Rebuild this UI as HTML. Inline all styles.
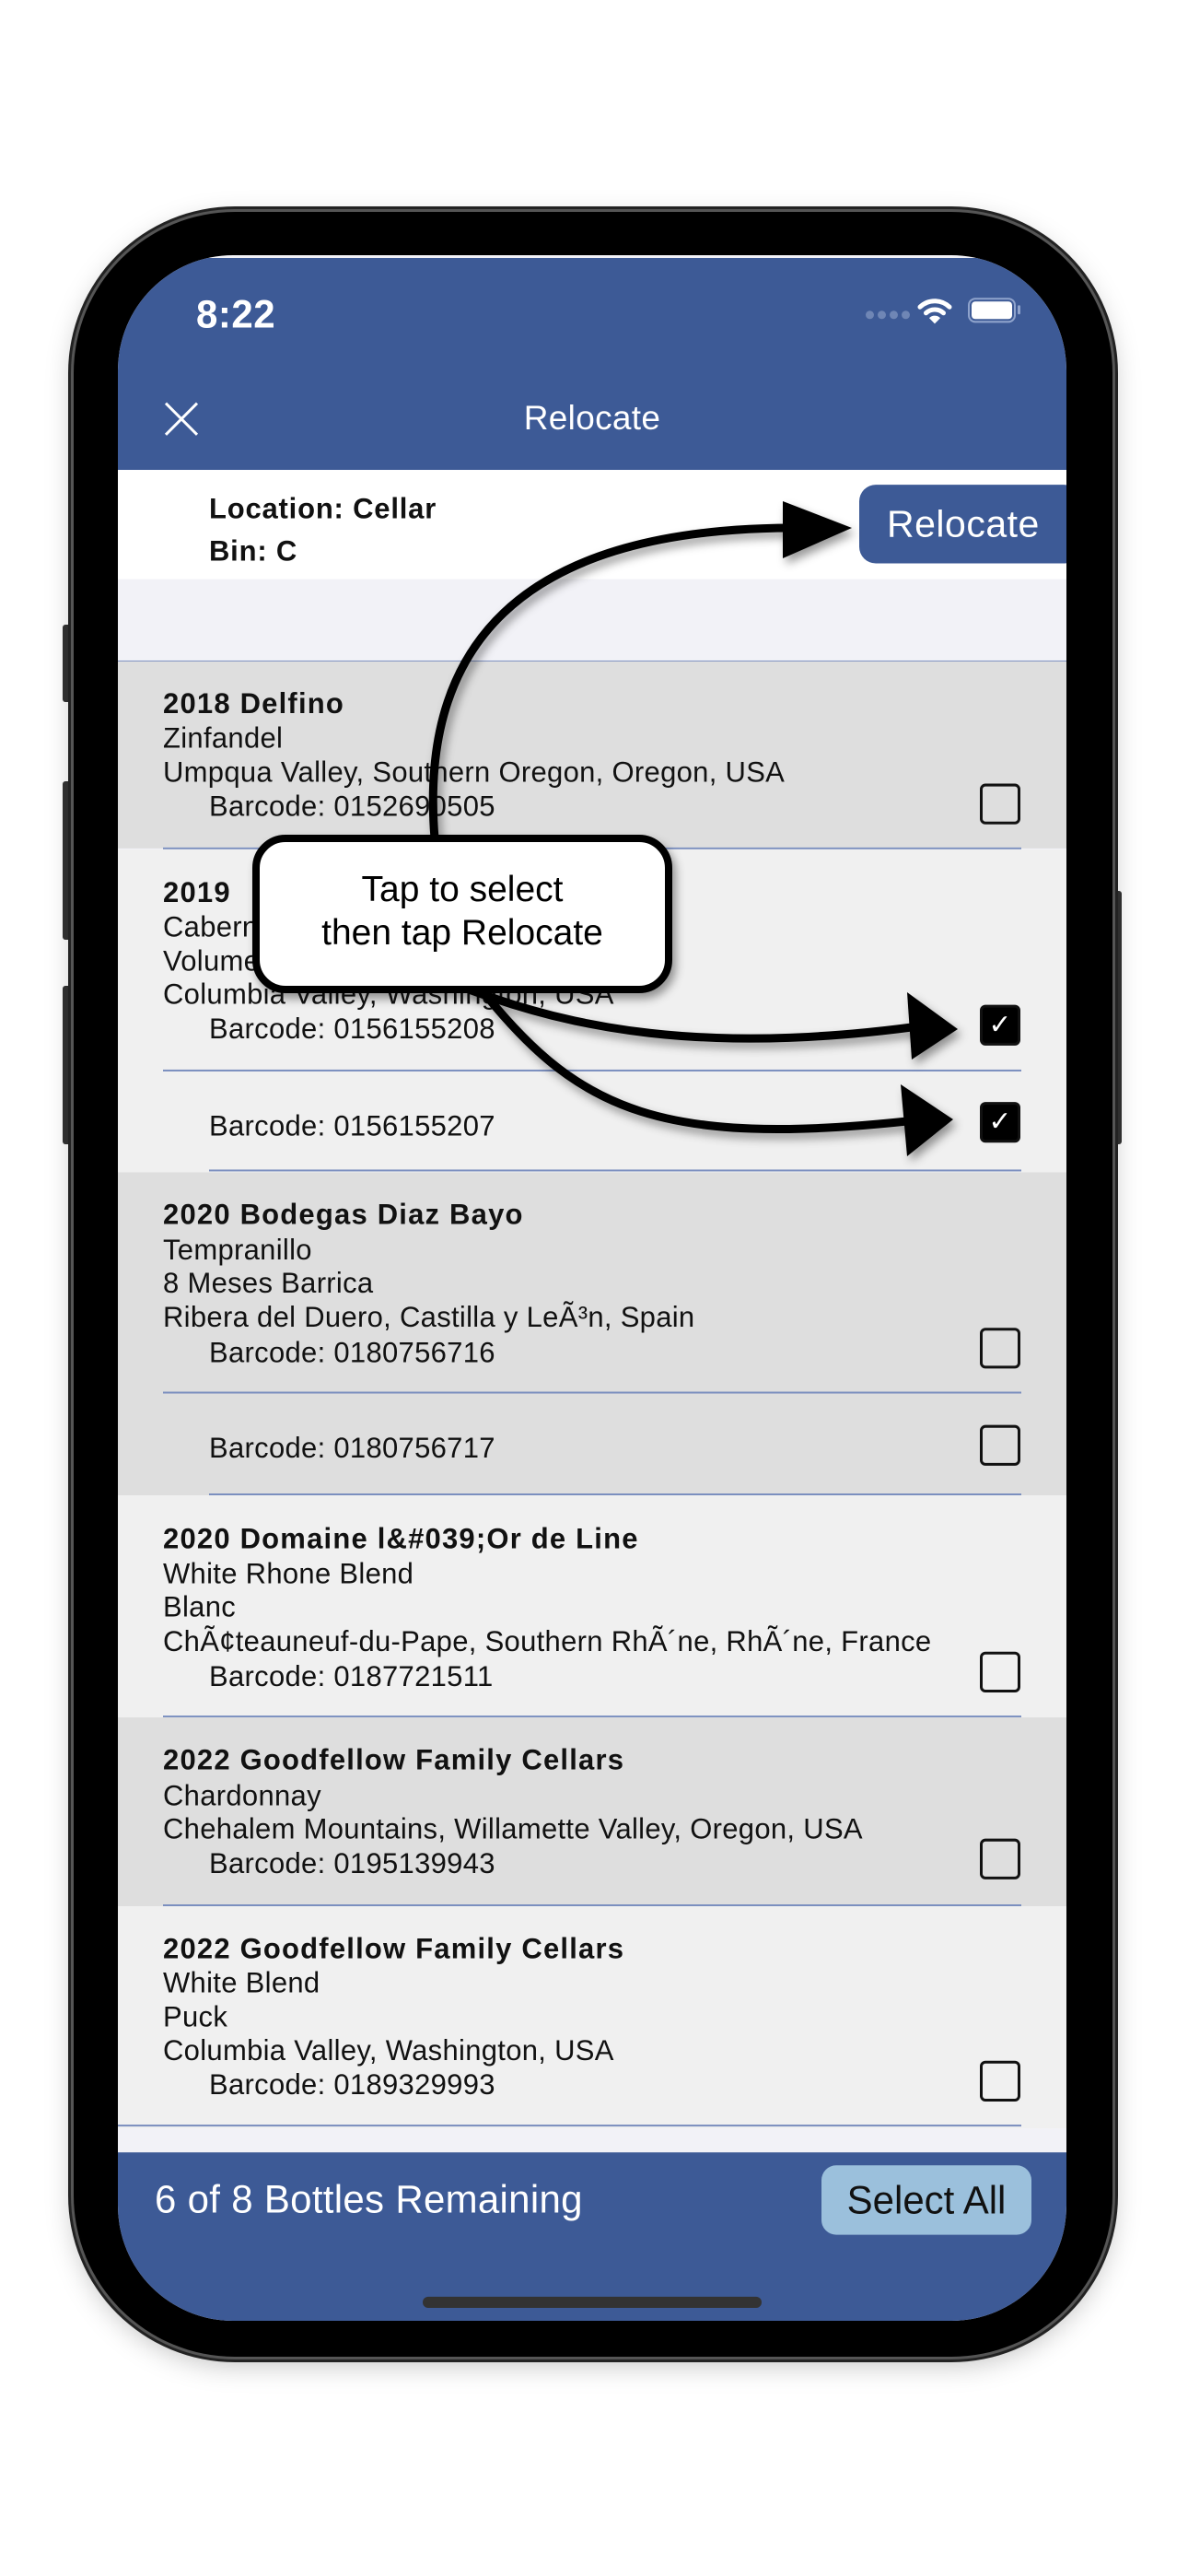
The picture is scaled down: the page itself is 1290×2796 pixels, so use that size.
<!DOCTYPE html>
<html><head><meta charset="utf-8">
<style>
*{margin:0;padding:0;box-sizing:border-box}
body{width:1290px;height:2796px;background:#fff;position:relative;overflow:hidden;font-family:"Liberation Sans",sans-serif}
.abs{position:absolute}
.phone{left:80px;top:230px;width:1128px;height:2328px;border-radius:175px;background:#000;box-shadow:0 0 0 3px #555,0 0 0 6px #222,0 8px 30px rgba(0,0,0,.25)}
.screen{left:128px;top:277px;width:1030px;height:2242px;border-radius:125px;overflow:hidden;background:#f2f2f7}
.wrap{position:absolute;left:0;top:0;width:1030px;height:2250px;transform-origin:0 0;transform:translateY(3px) scaleY(1.0045)}
.t{position:absolute;font-size:31px;line-height:34px;color:#111;white-space:nowrap;letter-spacing:0.3px}
.b{font-weight:bold;letter-spacing:1.2px}
.cb{position:absolute;width:44px;height:44px;border:3px solid #111;border-radius:6px;left:936px}
.cb.on{background:#000;color:#fff;font-size:30px;text-align:center;line-height:38px}
.ln{position:absolute;height:2px;background:#7b8fbf}
</style></head><body>
<div class="abs" style="left:68px;top:678px;width:14px;height:84px;background:#333;border-radius:3px"></div>
<div class="abs" style="left:68px;top:848px;width:14px;height:172px;background:#333;border-radius:3px"></div>
<div class="abs" style="left:68px;top:1070px;width:14px;height:172px;background:#333;border-radius:3px"></div>
<div class="abs" style="left:1204px;top:967px;width:14px;height:275px;background:#333;border-radius:3px"></div>
<div class="abs phone"></div>
<div class="abs screen"><div class="wrap">
  <div class="abs" style="left:0;top:0;width:1030px;height:229px;background:#3d5a96"></div>
  <div class="t" style="left:85px;top:41px;font-size:42px;line-height:40px;color:#fff;font-weight:bold;letter-spacing:0.5px">8:22</div>
  <div class="abs" style="left:812px;top:57px;width:48px;height:10px;display:flex;gap:4px"><i style="width:9px;height:9px;border-radius:50%;background:#6f86b5"></i><i style="width:9px;height:9px;border-radius:50%;background:#6f86b5"></i><i style="width:9px;height:9px;border-radius:50%;background:#6f86b5"></i><i style="width:9px;height:9px;border-radius:50%;background:#6f86b5"></i></div>
  <svg class="abs" style="left:868px;top:42px" width="38" height="30" viewBox="0 0 38 30"><path d="M3 11 A23 23 0 0 1 35 11" stroke="#fff" stroke-width="5" fill="none" stroke-linecap="round"/><path d="M9.5 17.5 A14 14 0 0 1 28.5 17.5" stroke="#fff" stroke-width="5" fill="none" stroke-linecap="round"/><path d="M19 29 L13 23 A8 8 0 0 1 25 23 Z" fill="#fff"/></svg>
  <div class="abs" style="left:923px;top:43px;width:52px;height:27px;border:2px solid #8fa3cc;border-radius:8px;padding:2px"><div style="width:100%;height:100%;background:#fff;border-radius:4px"></div></div>
  <div class="abs" style="left:977px;top:51px;width:3px;height:10px;background:#8fa3cc;border-radius:2px"></div>
  <svg class="abs" style="left:50px;top:155px" width="38" height="38"><path d="M2 2L36 36M36 2L2 36" stroke="#fff" stroke-width="3"/></svg>
  <div class="t" style="left:0;width:1030px;text-align:center;top:153px;font-size:37px;line-height:40px;color:#fff">Relocate</div>
  <div class="abs" style="left:0;top:229px;width:1030px;height:118px;background:#fff"></div>
  <div class="t b" style="left:99px;top:254px;font-size:31px;letter-spacing:0.8px">Location: Cellar</div>
  <div class="t b" style="left:99px;top:300px;font-size:31px;letter-spacing:0.8px">Bin: C</div>
  <div class="abs" style="left:805px;top:245px;width:240px;height:85px;background:#3d5a96;border-radius:18px;color:#fff;font-size:41px;line-height:85px;padding-left:30px;letter-spacing:0.5px">Relocate</div>
  <div class="ln" style="left:0;top:435px;width:1030px;height:1px"></div>
  <div class="abs" style="left:0;top:436px;width:1030px;height:202px;background:#dedede"></div>
  <div class="t b" style="left:49px;top:465px">2018 Delfino</div>
  <div class="t" style="left:49px;top:502px">Zinfandel</div>
  <div class="t" style="left:49px;top:539px">Umpqua Valley, Southern Oregon, Oregon, USA</div>
  <div class="t" style="left:99px;top:576px">Barcode: 0152690505</div>
  <div class="cb" style="top:568px"></div>
  <div class="ln" style="left:49px;top:637px;width:932px"></div>
  <div class="abs" style="left:0;top:639px;width:1030px;height:349px;background:#f0f0f0"></div>
  <div class="t b" style="left:49px;top:669px">2019</div>
  <div class="t" style="left:49px;top:706px">Cabernet</div>
  <div class="t" style="left:49px;top:743px">Volume</div>
  <div class="t" style="left:49px;top:779px">Columbia Valley, Washington, USA</div>
  <div class="t" style="left:99px;top:816px">Barcode: 0156155208</div>
  <div class="cb on" style="top:807px">✓</div>
  <div class="ln" style="left:49px;top:877px;width:932px"></div>
  <div class="t" style="left:99px;top:921px">Barcode: 0156155207</div>
  <div class="cb on" style="top:912px">✓</div>
  <div class="ln" style="left:99px;top:985px;width:882px"></div>
  <div class="abs" style="left:0;top:988px;width:1030px;height:349px;background:#dedede"></div>
  <div class="t b" style="left:49px;top:1017px">2020 Bodegas Diaz Bayo</div>
  <div class="t" style="left:49px;top:1055px">Tempranillo</div>
  <div class="t" style="left:49px;top:1091px">8 Meses Barrica</div>
  <div class="t" style="left:49px;top:1128px">Ribera del Duero, Castilla y LeÃ³n, Spain</div>
  <div class="t" style="left:99px;top:1166px">Barcode: 0180756716</div>
  <div class="cb" style="top:1156px"></div>
  <div class="ln" style="left:49px;top:1225px;width:932px"></div>
  <div class="t" style="left:99px;top:1269px">Barcode: 0180756717</div>
  <div class="cb" style="top:1261px"></div>
  <div class="ln" style="left:99px;top:1335px;width:882px"></div>
  <div class="abs" style="left:0;top:1337px;width:1030px;height:240px;background:#f0f0f0"></div>
  <div class="t b" style="left:49px;top:1367px">2020 Domaine l&amp;#039;Or de Line</div>
  <div class="t" style="left:49px;top:1405px">White Rhone Blend</div>
  <div class="t" style="left:49px;top:1441px">Blanc</div>
  <div class="t" style="left:49px;top:1478px">ChÃ¢teauneuf-du-Pape, Southern RhÃ´ne, RhÃ´ne, France</div>
  <div class="t" style="left:99px;top:1516px">Barcode: 0187721511</div>
  <div class="cb" style="top:1506px"></div>
  <div class="ln" style="left:49px;top:1575px;width:932px"></div>
  <div class="abs" style="left:0;top:1577px;width:1030px;height:204px;background:#dedede"></div>
  <div class="t b" style="left:49px;top:1606px">2022 Goodfellow Family Cellars</div>
  <div class="t" style="left:49px;top:1645px">Chardonnay</div>
  <div class="t" style="left:49px;top:1681px">Chehalem Mountains, Willamette Valley, Oregon, USA</div>
  <div class="t" style="left:99px;top:1718px">Barcode: 0195139943</div>
  <div class="cb" style="top:1708px"></div>
  <div class="ln" style="left:49px;top:1779px;width:932px"></div>
  <div class="abs" style="left:0;top:1781px;width:1030px;height:240px;background:#f0f0f0"></div>
  <div class="t b" style="left:49px;top:1810px">2022 Goodfellow Family Cellars</div>
  <div class="t" style="left:49px;top:1847px">White Blend</div>
  <div class="t" style="left:49px;top:1884px">Puck</div>
  <div class="t" style="left:49px;top:1920px">Columbia Valley, Washington, USA</div>
  <div class="t" style="left:99px;top:1957px">Barcode: 0189329993</div>
  <div class="cb" style="top:1948px"></div>
  <div class="ln" style="left:0;top:2017px;width:981px"></div>
  <div class="abs" style="left:0;top:2047px;width:1030px;height:210px;background:#3d5a96"></div>
  <div class="t" style="left:40px;top:2076px;font-size:42px;line-height:44px;color:#fff;letter-spacing:0.3px">6 of 8 Bottles Remaining</div>
  <div class="abs" style="left:764px;top:2061px;width:228px;height:75px;background:#9bc0dc;border-radius:16px;font-size:42px;line-height:75px;text-align:center;color:#111">Select All</div>
  <div class="abs" style="left:331px;top:2203px;width:368px;height:12px;background:#333;border-radius:6px"></div>
</div></div>
<svg class="abs" style="left:0;top:0" width="1290" height="2796">
  <defs><filter id="sh" x="-20%" y="-20%" width="140%" height="140%"><feDropShadow dx="4" dy="6" stdDeviation="5" flood-opacity="0.4"/></filter></defs>
  <g filter="url(#sh)" fill="none" stroke="#000" stroke-width="9" stroke-linecap="round">
    <path d="M472 910 C455 705 560 574 860 573"/>
    <path d="M512 1075 C620 1115 760 1145 990 1115"/>
    <path d="M530 1083 C630 1205 720 1245 985 1217"/>
  </g>
  <g filter="url(#sh)" fill="#000">
    <path d="M925 573 L850 544 L850 606 Z"/>
    <path d="M1040 1117 L985 1077 L990 1150 Z"/>
    <path d="M1035 1215 L978 1177 L985 1255 Z"/>
  </g>
  <rect x="278" y="910" width="448" height="164" rx="32" fill="#fff" stroke="#000" stroke-width="8" filter="url(#sh)"/>
  <text x="502" y="978" text-anchor="middle" font-family="Liberation Sans, sans-serif" font-size="39" fill="#000">Tap to select</text>
  <text x="502" y="1025" text-anchor="middle" font-family="Liberation Sans, sans-serif" font-size="39" fill="#000">then tap Relocate</text>
</svg>
</body></html>
